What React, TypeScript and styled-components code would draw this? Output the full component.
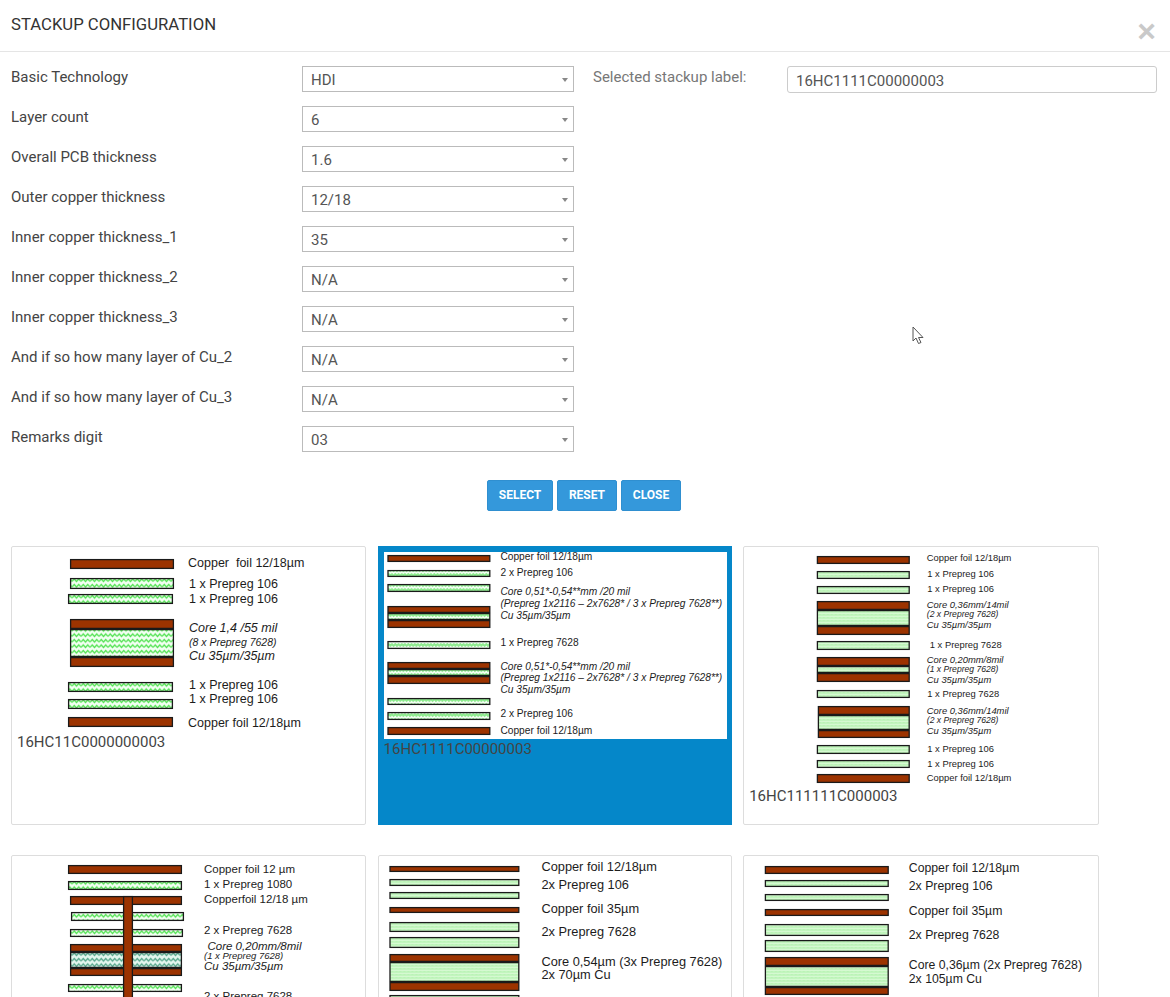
import { FC } from "react";
import styled, { createGlobalStyle } from "styled-components";

const GlobalStyle = createGlobalStyle`
    html, body {
        margin: 0;
        height: 997px;
        overflow: hidden;
        background: white;
        font-family: Roboto, "Liberation Sans", sans-serif;
    }
`;

const Page = styled.div`
    position: relative;
    width: 1170px;
`;

const Header = styled.header`
    height: 52px;
    padding: 0 14px 0 11px;
    box-sizing: border-box;
    display: flex;
    align-items: flex-start;
    justify-content: space-between;
    border-bottom: 1px solid #e5e5e5;
`;

const Title = styled.h4`
    margin: 0;
    padding-top: 15px;
    font-size: 16.7px;
    line-height: 20px;
    font-weight: 400;
    color: #333;
`;

const CloseX = styled.button`
    margin: 13px 0 0;
    padding: 0;
    border: 0;
    background: none;
    font-family: "Liberation Sans", sans-serif;
    font-size: 32px;
    line-height: 36px;
    font-weight: 700;
    color: #c9c9c9;
`;

const Form = styled.div`
    display: flex;
    padding: 14px 13px 0 11px;
`;

const Fields = styled.div`
    width: 582px;
    display: flex;
    flex-direction: column;
    row-gap: 14px;
`;

const FieldRow = styled.label`
    display: flex;
    height: 26px;
`;

const FieldName = styled.span`
    width: 291px;
    font-size: 15px;
    line-height: 22px;
    color: #444;
`;

const SelectBox = styled.span`
    position: relative;
    width: 272px;
    height: 26px;
    &::after {
        content: "";
        position: absolute;
        right: 6px;
        top: 12px;
        border-left: 3.5px solid transparent;
        border-right: 3.5px solid transparent;
        border-top: 4px solid #888;
    }
`;

const Select = styled.select`
    appearance: none;
    width: 100%;
    height: 100%;
    margin: 0;
    padding: 2px 20px 0 8px;
    box-sizing: border-box;
    border: 1px solid #bbb;
    border-radius: 0;
    background: white;
    font-family: inherit;
    font-size: 15px;
    color: #555;
`;

const LabelField = styled.div`
    flex: 1;
    display: flex;
    height: 27px;
`;

const LabelName = styled.span`
    width: 194px;
    font-size: 15px;
    line-height: 22px;
    color: #777;
`;

const LabelInput = styled.input`
    flex: 1;
    min-width: 0;
    padding: 2px 8px 0;
    box-sizing: border-box;
    border: 1px solid #ccc;
    border-radius: 3px;
    font-family: inherit;
    font-size: 15px;
    color: #555;
`;

const Buttons = styled.div`
    display: flex;
    justify-content: center;
    column-gap: 4px;
    margin: 28px 2px 35px 0;
`;

const ActionButton = styled.button<{ $width: number }>`
    width: ${({ $width }) => $width}px;
    height: 31px;
    padding: 0 0 2px;
    border: 1px solid #2f8fd0;
    border-radius: 2px;
    background: #3498db;
    font-family: inherit;
    font-size: 12px;
    font-weight: 700;
    color: white;
`;

const CardGrid = styled.div`
    display: grid;
    grid-template-columns: 355px 354px 356px;
    column-gap: 11.6px;
    row-gap: 30px;
    padding-left: 11px;
`;

const Card = styled.div<{ $selected?: boolean }>`
    height: 279px;
    padding: 5px;
    box-sizing: border-box;
    overflow: hidden;
    border: 1px solid ${({ $selected }) => ($selected ? "#0587c9" : "#ddd")};
    border-radius: ${({ $selected }) => ($selected ? 0 : 2)}px;
    background: ${({ $selected }) => ($selected ? "#0587c9" : "white")};
`;

const Diagram = styled.svg`
    display: block;
    overflow: visible;
    background: white;
`;

const Caption = styled.div`
    font-size: 15px;
    line-height: 20px;
    color: #444;
`;

const Copper = styled.rect`
    fill: #9c3300;
    stroke: #1a1a1a;
    stroke-width: 1.3;
`;

const Prepreg = styled.rect`
    stroke: #1a1a1a;
    stroke-width: 1.3;
`;

const Note = styled.text<{ $italic?: boolean; $size: number }>`
    font-family: "Liberation Sans", Arial, sans-serif;
    font-size: ${({ $size }) => $size}px;
    font-style: ${({ $italic }) => ($italic ? "italic" : "normal")};
    dominant-baseline: central;
    fill: #1c1c1c;
`;

const Cursor = styled.svg`
    position: absolute;
    left: 912px;
    top: 326px;
`;

type LayerKind = "copper" | "prepreg" | "resin";
type Layer = { kind: LayerKind; x1: number; y1: number; x2: number; y2: number };
type Line = { text: string; x: number; y: number; italic?: boolean; size?: number };
type Weave = "wave" | "fine" | "dense";
type Stackup = {
    id: string;
    label?: string;
    selected?: boolean;
    // view origin is the place of the picture on the page
    left: number;
    top: number;
    width: number;
    height: number;
    textSize: number;
    weave: Weave;
    layers: Layer[];
    lines: Line[];
};

const copper = (x1: number, y1: number, x2: number, y2: number): Layer => ({ kind: "copper", x1, y1, x2, y2 });
const prepreg = (x1: number, y1: number, x2: number, y2: number): Layer => ({ kind: "prepreg", x1, y1, x2, y2 });
const core = (x1: number, x2: number, y1: number, y2: number, y3: number, y4: number, inner: LayerKind = "prepreg"): Layer[] => [
    { kind: inner, x1, y1: y2, x2, y2: y3 },
    copper(x1, y1, x2, y2),
    copper(x1, y3, x2, y4),
];

// y is the middle of the line, the small lift lines it up with the reference
const note = (x: number, y: number, text: string, size?: number): Line => ({ x, y: y - 0.8, text, size });
const slanted = (x: number, y: number, text: string, size?: number): Line => ({ x, y: y - 0.8, text, size, italic: true });

const STACKUPS: Stackup[] = [
    {
        id: "a",
        label: "16HC11C0000000003",
        left: 17,
        top: 552,
        width: 343,
        height: 180,
        textSize: 12.5,
        weave: "wave",
        layers: [
            copper(70, 559, 174, 569),
            prepreg(70, 578, 174, 589),
            prepreg(68, 594, 173, 604),
            ...core(70, 174, 619, 629, 657, 667),
            prepreg(68, 682, 173, 692),
            prepreg(68, 699, 173, 709),
            copper(68, 717, 173, 727),
        ],
        lines: [
            note(188, 563.5, "Copper  foil 12/18µm"),
            note(189, 585, "1 x Prepreg 106"),
            note(189, 599.5, "1 x Prepreg 106"),
            slanted(189, 628.5, "Core 1,4 /55 mil"),
            slanted(189, 642.5, "(8 x Prepreg 7628)", 10.5),
            slanted(189, 656.5, "Cu 35µm/35µm"),
            note(189, 685.5, "1 x Prepreg 106"),
            note(189, 700, "1 x Prepreg 106"),
            note(188, 723.5, "Copper foil 12/18µm"),
        ],
    },
    {
        id: "b",
        label: "16HC1111C00000003",
        selected: true,
        left: 383.6,
        top: 552,
        width: 343,
        height: 187,
        textSize: 10.2,
        weave: "fine",
        layers: [
            copper(387, 555, 490, 562),
            prepreg(387, 570, 490, 577),
            prepreg(387, 584, 490, 592),
            ...core(387, 490, 606, 613, 620, 628),
            prepreg(387, 641, 490, 649),
            ...core(387, 490, 662, 669, 676, 684),
            prepreg(387, 698, 490, 705),
            prepreg(387, 712, 490, 720),
            copper(387, 727, 490, 735),
        ],
        lines: [
            note(500, 557.5, "Copper foil 12/18µm"),
            note(500, 573, "2 x Prepreg 106"),
            slanted(500, 592.5, "Core 0,51*-0,54**mm /20 mil"),
            slanted(500, 604.5, "(Prepreg 1x2116 – 2x7628* / 3 x Prepreg 7628**)"),
            slanted(500, 616, "Cu 35µm/35µm"),
            note(500, 643.5, "1 x Prepreg 7628"),
            slanted(500, 667, "Core 0,51*-0,54**mm /20 mil"),
            slanted(500, 678.5, "(Prepreg 1x2116 – 2x7628* / 3 x Prepreg 7628**)"),
            slanted(500, 690.5, "Cu 35µm/35µm"),
            note(500, 714, "2 x Prepreg 106"),
            note(500, 731.5, "Copper foil 12/18µm"),
        ],
    },
    {
        id: "c",
        label: "16HC111111C000003",
        left: 749.2,
        top: 552,
        width: 343,
        height: 234,
        textSize: 9.4,
        weave: "dense",
        layers: [
            copper(817, 556, 910, 564),
            prepreg(817, 571, 910, 579),
            prepreg(817, 586, 910, 594),
            ...core(817, 910, 601, 610, 626, 635),
            prepreg(817, 641, 910, 650),
            ...core(817, 910, 657, 666, 673, 682),
            prepreg(817, 690, 910, 698),
            ...core(818, 910, 706, 715, 730, 738),
            prepreg(817, 745, 910, 754),
            prepreg(817, 760, 910, 768),
            copper(817, 774, 910, 783),
        ],
        lines: [
            note(927, 558, "Copper foil 12/18µm"),
            note(927.5, 574.5, "1 x Prepreg 106"),
            note(927.5, 589.5, "1 x Prepreg 106"),
            slanted(927, 605.5, "Core 0,36mm/14mil"),
            slanted(927, 614.5, "(2 x Prepreg 7628)", 8.6),
            slanted(927, 625.5, "Cu 35µm/35µm"),
            note(930, 645.5, "1 x Prepreg 7628"),
            slanted(927, 660, "Core 0,20mm/8mil"),
            slanted(927, 669.5, "(1 x Prepreg 7628)", 8.6),
            slanted(927, 680, "Cu 35µm/35µm"),
            note(927.5, 694.5, "1 x Prepreg 7628"),
            slanted(927, 711.5, "Core 0,36mm/14mil"),
            slanted(927, 720.5, "(2 x Prepreg 7628)", 8.6),
            slanted(927, 731, "Cu 35µm/35µm"),
            note(927.5, 749.5, "1 x Prepreg 106"),
            note(927.5, 764, "1 x Prepreg 106"),
            note(927, 778.5, "Copper foil 12/18µm"),
        ],
    },
    {
        id: "d",
        left: 17,
        top: 861,
        width: 343,
        height: 220,
        textSize: 11.5,
        weave: "wave",
        layers: [
            copper(68, 865, 182, 874),
            prepreg(68, 881, 182, 890),
            copper(70, 896, 182, 905),
            prepreg(71, 912, 184, 921),
            prepreg(70, 929, 183, 937),
            ...core(70, 182, 944, 952, 968, 976, "resin"),
            prepreg(68, 984, 182, 992),
            copper(123, 896, 133, 1040),
        ],
        lines: [
            note(204, 869.5, "Copper foil 12 µm"),
            note(204, 885, "1 x Prepreg 1080"),
            note(204, 900, "Copperfoil 12/18 µm"),
            note(204, 931, "2 x Prepreg 7628"),
            slanted(207.5, 946.5, "Core 0,20mm/8mil"),
            slanted(204, 956.5, "(1 x Prepreg 7628)", 9.5),
            slanted(204, 966.5, "Cu 35µm/35µm"),
            note(204, 997, "2 x Prepreg 7628"),
        ],
    },
    {
        id: "e",
        left: 383.6,
        top: 861,
        width: 343,
        height: 220,
        textSize: 12.8,
        weave: "dense",
        layers: [
            copper(389, 866, 519, 872),
            prepreg(389, 879, 519, 886),
            prepreg(389, 892, 519, 899),
            copper(389, 907, 519, 913),
            prepreg(389, 922, 519, 932),
            prepreg(389, 937, 519, 948),
            ...core(389, 519, 954, 962, 982, 991),
            prepreg(389, 995, 519, 1010),
        ],
        lines: [
            note(541, 867.5, "Copper foil 12/18µm"),
            note(541, 885.5, "2x Prepreg 106"),
            note(541, 909, "Copper foil 35µm"),
            note(541, 932, "2x Prepreg 7628"),
            note(541, 962.5, "Core 0,54µm (3x Prepreg 7628)"),
            note(541, 975.5, "2x 70µm Cu"),
        ],
    },
    {
        id: "f",
        left: 749.2,
        top: 861,
        width: 343,
        height: 220,
        textSize: 12.25,
        weave: "dense",
        layers: [
            copper(765, 866, 889, 874),
            prepreg(765, 880, 889, 887),
            prepreg(765, 894, 889, 901),
            copper(765, 909, 889, 916),
            prepreg(765, 924, 889, 936),
            prepreg(765, 940, 889, 952),
            ...core(765, 889, 957, 966, 987, 995),
        ],
        lines: [
            note(909, 868.5, "Copper foil 12/18µm"),
            note(909, 886.5, "2x Prepreg 106"),
            note(909, 911.5, "Copper foil 35µm"),
            note(909, 935.5, "2x Prepreg 7628"),
            note(909, 965.5, "Core 0,36µm (2x Prepreg 7628)"),
            note(909, 979.5, "2x 105µm Cu"),
        ],
    },
];

const FIELDS = [
    { name: "Basic Technology", value: "HDI" },
    { name: "Layer count", value: "6" },
    { name: "Overall PCB thickness", value: "1.6" },
    { name: "Outer copper thickness", value: "12/18" },
    { name: "Inner copper thickness_1", value: "35" },
    { name: "Inner copper thickness_2", value: "N/A" },
    { name: "Inner copper thickness_3", value: "N/A" },
    { name: "And if so how many layer of Cu_2", value: "N/A" },
    { name: "And if so how many layer of Cu_3", value: "N/A" },
    { name: "Remarks digit", value: "03" },
];

const WEAVES: Record<Weave, { w: number; h: number; amp: number; bg: string; line: string; stroke: number }> = {
    wave: { w: 9, h: 5.5, amp: 1.2, bg: "#f2fff2", line: "#58e458", stroke: 1.4 },
    fine: { w: 6.5, h: 5, amp: 1, bg: "#8eec8e", line: "#fafffa", stroke: 1.3 },
    dense: { w: 4, h: 3, amp: 1.2, bg: "#a8efa4", line: "#dafbd6", stroke: 0.9 },
};

const WeaveFill: FC<{ id: string; weave: Weave; resin?: boolean }> = ({ id, weave, resin }) => {
    const { w, h, amp, bg, line, stroke } = WEAVES[weave];
    const low = h / 2 + amp;
    const high = h / 2 - amp;
    const zig = `M0 ${low} L${w / 4} ${high} L${w / 2} ${low} L${(w * 3) / 4} ${high} L${w} ${low}`;
    return (
        <pattern id={id} width={w} height={h} patternUnits="userSpaceOnUse">
            <rect width={w} height={h} fill={resin ? "#e3f6ee" : bg} />
            <path d={zig} fill="none" stroke={resin ? "#5aa98f" : line} strokeWidth={stroke} />
        </pattern>
    );
};

const StackupDiagram: FC<{ stackup: Stackup }> = ({ stackup }) => {
    const { id, left, top, width, height, weave, textSize, layers, lines } = stackup;
    const fillId = `weave-${id}`;
    const resinId = `resin-${id}`;
    return (
        <Diagram width={width} height={height} viewBox={`${left} ${top} ${width} ${height}`}>
            <defs>
                <WeaveFill id={fillId} weave={weave} />
                <WeaveFill id={resinId} weave={weave} resin />
            </defs>
            {layers.map((layer, i) => {
                const box = {
                    x: layer.x1 + 0.6,
                    y: layer.y1 + 0.6,
                    width: layer.x2 - layer.x1 - 1.2,
                    height: layer.y2 - layer.y1 - 1.2,
                };
                if (layer.kind === "copper") return <Copper key={i} {...box} />;
                return <Prepreg key={i} {...box} fill={`url(#${layer.kind === "resin" ? resinId : fillId})`} />;
            })}
            {lines.map((line, i) => (
                <Note key={i} x={line.x} y={line.y} $italic={line.italic} $size={line.size ?? textSize} xmlSpace="preserve">
                    {line.text}
                </Note>
            ))}
        </Diagram>
    );
};

export default function App() {
    return (
        <Page>
            <GlobalStyle />
            <Header>
                <Title>STACKUP CONFIGURATION</Title>
                <CloseX type="button">×</CloseX>
            </Header>
            <Form>
                <Fields>
                    {FIELDS.map(({ name, value }) => (
                        <FieldRow key={name}>
                            <FieldName>{name}</FieldName>
                            <SelectBox>
                                <Select defaultValue={value}>
                                    <option value={value}>{value}</option>
                                </Select>
                            </SelectBox>
                        </FieldRow>
                    ))}
                </Fields>
                <LabelField>
                    <LabelName>Selected stackup label:</LabelName>
                    <LabelInput readOnly value="16HC1111C00000003" />
                </LabelField>
            </Form>
            <Buttons>
                <ActionButton type="button" $width={66}>SELECT</ActionButton>
                <ActionButton type="button" $width={60}>RESET</ActionButton>
                <ActionButton type="button" $width={60}>CLOSE</ActionButton>
            </Buttons>
            <CardGrid>
                {STACKUPS.map((stackup) => (
                    <Card key={stackup.id} $selected={stackup.selected}>
                        <StackupDiagram stackup={stackup} />
                        {stackup.label && <Caption>{stackup.label}</Caption>}
                    </Card>
                ))}
            </CardGrid>
            <Cursor width="13" height="19" viewBox="0 0 13 19">
                <path d="M1 1 L1 15 L4 12 L6.5 17.5 L9 16.5 L6.5 11.5 L11 11.5 Z" fill="white" stroke="#555" strokeWidth="1" />
            </Cursor>
        </Page>
    );
}
